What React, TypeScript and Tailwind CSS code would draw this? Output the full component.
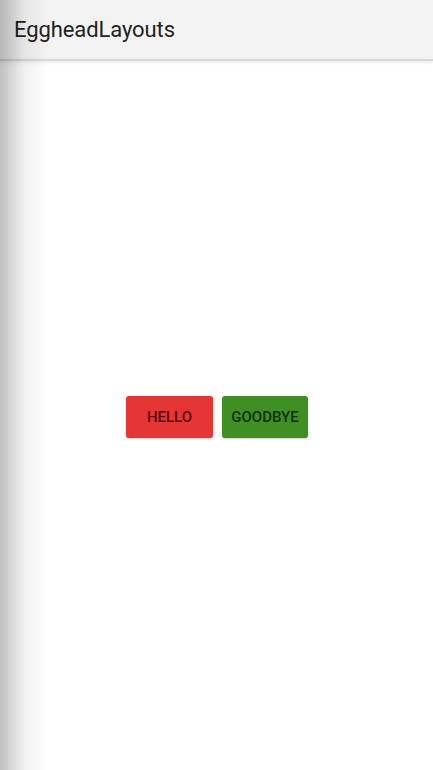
export default function App() {
  return (
    <div className="relative flex flex-col h-[770px] w-[433px] bg-white overflow-hidden font-['Roboto',sans-serif]">
      {/* toolbar */}
      <div className="h-[61px] shrink-0 flex items-center px-[14px] pt-[1px] bg-[#f3f3f3] border-b-2 border-[#d6d6d6] shadow-[0_2px_3px_rgba(0,0,0,0.08)] z-10">
        <span className="text-[22px] text-[#222] leading-none tracking-[-0.1px]">EggheadLayouts</span>
      </div>

      {/* content */}
      <div className="flex-1 flex items-center justify-center gap-[9px] pl-[1px] pt-[3px]">
        <button className="w-[87px] h-[42px] rounded-[3px] bg-[#e53535] text-[#5a0808] text-[15px] font-medium shadow-[0_1px_2px_rgba(0,0,0,0.2)]">
          HELLO
        </button>
        <button className="w-[86px] h-[42px] rounded-[3px] bg-[#3f8f22] text-[#0f300a] text-[15px] font-medium shadow-[0_1px_2px_rgba(0,0,0,0.2)]">
          GOODBYE
        </button>
      </div>

      {/* drawer edge shadow */}
      <div className="pointer-events-none absolute inset-y-0 left-0 w-[48px] z-20 bg-gradient-to-r from-[rgba(0,0,0,0.25)] via-[rgba(0,0,0,0.06)] to-transparent" />
    </div>
  );
}
